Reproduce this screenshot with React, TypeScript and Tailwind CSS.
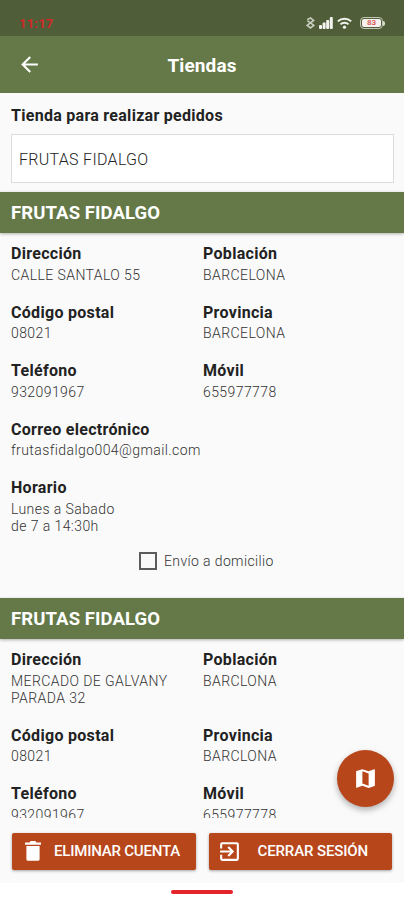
import { FC } from 'react';
import { MdArrowBack, MdExitToApp, MdMap } from 'react-icons/md';

interface Store {
  name: string;
  address: string[];
  city: string;
  postalCode: string;
  province: string;
  phone: string;
  mobile: string;
  email?: string;
  schedule?: string[];
  delivery?: boolean;
}

const stores: Store[] = [
  {
    name: 'FRUTAS FIDALGO',
    address: ['CALLE SANTALO 55'],
    city: 'BARCELONA',
    postalCode: '08021',
    province: 'BARCELONA',
    phone: '932091967',
    mobile: '655977778',
    email: 'frutasfidalgo004@gmail.com',
    schedule: ['Lunes a Sabado', 'de 7 a 14:30h'],
    delivery: false,
  },
  {
    name: 'FRUTAS FIDALGO',
    address: ['MERCADO DE GALVANY', 'PARADA 32'],
    city: 'BARCLONA',
    postalCode: '08021',
    province: 'BARCLONA',
    phone: '932091967',
    mobile: '655977778',
  },
];

interface FieldProps {
  label: string;
  lines: string[];
}

const Field: FC<FieldProps> = ({ label, lines }) => (
  <div className="pb-[17.7px]">
    <p className="text-[16px] leading-[22px] font-bold tracking-[0.3px] text-[#222]">
      {label}
    </p>
    <div className="pt-[1.5px] text-[14px] leading-[17.3px] font-light tracking-[0.42px] text-[#333]">
      {lines.map((line) => (
        <p key={line} className="whitespace-nowrap">
          {line}
        </p>
      ))}
    </div>
  </div>
);

const StoreSection: FC<{ store: Store }> = ({ store }) => (
  <section>
    <h2 className="h-[41px] bg-[#647947] pl-[11px] text-[18.5px] leading-[43px] font-bold tracking-[0.1px] text-white shadow-[0_1px_3px_rgba(0,0,0,0.3)]">
      {store.name}
    </h2>
    <div className="h-[365px] pt-[10.2px] pl-[11px]">
      <div className="grid grid-cols-[192px_1fr]">
        <Field label="Dirección" lines={store.address} />
        <Field label="Población" lines={[store.city]} />
        <Field label="Código postal" lines={[store.postalCode]} />
        <Field label="Provincia" lines={[store.province]} />
        <Field label="Teléfono" lines={[store.phone]} />
        <Field label="Móvil" lines={[store.mobile]} />
      </div>
      {store.email && <Field label="Correo electrónico" lines={[store.email]} />}
      {store.schedule && <Field label="Horario" lines={store.schedule} />}
      {store.delivery !== undefined && (
        <div className="-mt-px flex items-center pl-[128px]">
          <span className="size-[18px] border-2 border-[#5c5c5c]" />
          <span className="pl-[7px] text-[14px] leading-[18px] font-light tracking-[0.38px] text-[#333]">
            Envío a domicilio
          </span>
        </div>
      )}
    </div>
  </section>
);

const TrashIcon = () => (
  <svg className="h-[20px] w-[16px]" viewBox="0 0 16 20" fill="currentColor">
    <path d="M0 1.4h4.6L5.6 0h4.8l1 1.4H16v2.4H0z" />
    <path d="M1.4 5h13.2v13.2a1.6 1.6 0 0 1-1.6 1.6H3a1.6 1.6 0 0 1-1.6-1.6z" />
  </svg>
);

const StatusBar = () => (
  <div className="flex h-[36px] items-center bg-[#4f5d39] pt-[10px] pr-[19px] pl-[19px]">
    <span className="flex-1 text-[13px] leading-none font-bold tracking-[0.2px] text-[#cf2a28]">
      11:17
    </span>
    <svg className="h-[12px] w-[9px]" viewBox="0 0 9 12" fill="none" stroke="#c9cdbf" strokeWidth="1.6">
      <path d="M1.2 2.6 4.5 1 7.6 3.4 1.2 8.4 4.5 11 7.8 8.4 1.4 3.6" />
    </svg>
    <svg className="ml-[4px] h-[12px] w-[14px]" viewBox="0 0 14 12" fill="#f3f4ef">
      <rect x="0" y="8" width="3" height="4" rx="1" />
      <rect x="3.6" y="5.5" width="3" height="6.5" rx="1" />
      <rect x="7.2" y="3" width="3" height="9" rx="1" />
      <rect x="10.8" y="0" width="3" height="12" rx="1" />
    </svg>
    <svg className="ml-[4px] h-[12px] w-[15px]" viewBox="0 0 15 12" fill="none" stroke="#f3f4ef" strokeWidth="2">
      <path d="M.8 4.4a9.6 9.6 0 0 1 13.4 0" />
      <path d="M3.5 7.4a5.8 5.8 0 0 1 8 0" />
      <circle cx="7.5" cy="10.2" r="1.6" fill="#f3f4ef" stroke="none" />
    </svg>
    <div className="ml-[8px] flex h-[12px] w-[23px] rounded-[4px] border border-[#c3c8b5] p-px">
      <div className="flex-1 rounded-[2px] bg-[#f6f0ee] text-center text-[8px] leading-[8px] font-bold text-[#d8605c]">
        83
      </div>
    </div>
    <span className="h-[5px] w-[2px] rounded-r bg-[#d9dccf]" />
  </div>
);

export default function App() {
  return (
    <div className="relative flex h-[900px] w-[404px] flex-col overflow-hidden bg-white font-[Roboto,sans-serif]">
      <StatusBar />
      <header className="grid h-[57px] shrink-0 grid-cols-[60px_1fr_60px] items-center bg-[#647947] text-white">
        <MdArrowBack className="ml-[17px] size-[25px]" />
        <h1 className="pt-[3px] text-center text-[19px] font-bold tracking-[0.1px]">Tiendas</h1>
      </header>

      <main className="h-[725px] shrink-0 overflow-hidden bg-[#fafafa]">
        <div className="h-[99px] px-[11px] pt-[12px]">
          <p className="text-[16px] leading-[22px] font-bold tracking-[0.28px] text-[#222]">
            Tienda para realizar pedidos
          </p>
          <div className="mt-[7px] h-[49px] w-[383px] border border-[#dcdce0] bg-white pl-[7px] text-[16px] leading-[49px] font-light tracking-[0.3px] text-[#222]">
            FRUTAS FIDALGO
          </div>
        </div>
        {stores.map((store, index) => (
          <StoreSection key={index} store={store} />
        ))}
      </main>

      <footer className="flex h-[65px] shrink-0 gap-[13px] bg-[#fafafa] px-[12px] pt-[14.5px] text-[15px] font-medium whitespace-nowrap text-white">
        <button className="flex h-[37px] w-[184px] items-center rounded-[2px] bg-[#b8461b] pl-[13px] shadow-[0_1px_3px_rgba(0,0,0,0.35)]">
          <TrashIcon />
          <span className="pt-px pl-[13px] tracking-[-0.2px]">ELIMINAR CUENTA</span>
        </button>
        <button className="flex h-[37px] w-[184px] items-center rounded-[2px] bg-[#b8461b] pl-[8px] shadow-[0_1px_3px_rgba(0,0,0,0.35)]">
          <MdExitToApp className="size-[25px]" />
          <span className="pt-px pl-[16px] tracking-[-0.12px]">CERRAR SESIÓN</span>
        </button>
      </footer>
      <div className="mx-auto mt-[7px] h-[4px] w-[62px] rounded-full bg-[#e3242b]" />

      {/* Map button floats over the list */}
      <button className="absolute top-[750px] left-[337px] flex size-[57px] items-center justify-center rounded-full bg-[#b8461b] text-white shadow-[0_3px_6px_rgba(0,0,0,0.3)]">
        <MdMap className="size-[25px]" />
      </button>
    </div>
  );
}
